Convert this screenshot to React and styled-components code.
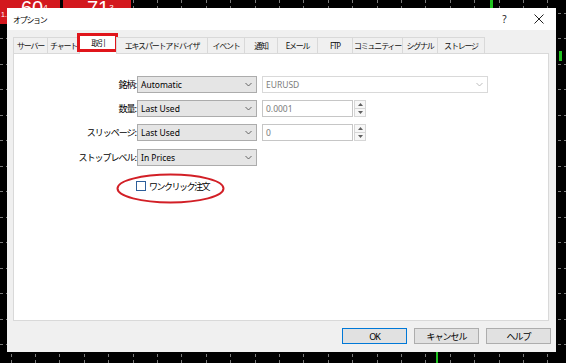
import React from 'react';
import styled, { createGlobalStyle } from 'styled-components';

const GlobalStyle = createGlobalStyle`
  html, body { margin: 0; padding: 0; background: #000; }
  body {
    width: 566px; height: 363px; overflow: hidden;
    font-family: "Noto Sans", "Noto Sans CJK JP", sans-serif;
  }
  * { box-sizing: border-box; }
`;

const Desktop = styled.div`
  position: relative;
  width: 566px;
  height: 363px;
  background: #000;
  overflow: hidden;
`;

const ChartSvg = styled.svg`
  position: absolute;
  left: 0;
  top: 0;
`;

const PriceTag = styled.div`
  position: absolute;
  top: 0;
  left: ${p => p.$x}px;
  width: ${p => p.$w}px;
  height: 24px;
  background: #d3181e;
  color: #fff;
  font-family: "Liberation Sans", sans-serif;
  line-height: 1;
`;

const TagClip = styled.div`
  position: absolute;
  top: 0;
  left: ${p => p.$x}px;
  height: 8px;
  overflow: hidden;
`;

const TagDigits = styled.span`
  display: block;
  font-size: 20px;
  line-height: 20px;
  margin-top: -2px;
  white-space: nowrap;
`;

const TagSup = styled.sup`
  font-size: 8px;
  vertical-align: top;
`;

const TagSmall = styled.span`
  position: absolute;
  left: 1px;
  top: 11px;
  font-size: 7px;
`;

const Dialog = styled.div`
  position: absolute;
  left: 7px;
  top: 8px;
  width: 549px;
  height: 344px;
  display: flex;
  flex-direction: column;
  background: #f0f0f0;
  color: #000;
`;

const TitleBar = styled.div`
  height: 22px;
  background: #fff;
  display: flex;
  align-items: center;
  padding-left: 6px;
`;

const TitleText = styled.span`
  flex: 1;
  font-size: 8px;
  letter-spacing: -1.3px;
  font-family: "Noto Sans CJK JP", sans-serif;
`;

const TitleButton = styled.div`
  width: ${p => p.$w}px;
  height: 22px;
  display: flex;
  align-items: center;
  justify-content: center;
  font-size: 10px;
  color: #222;
`;

const Body = styled.div`
  flex: 1;
  display: flex;
  flex-direction: column;
  padding: 7px 0 0 6px;
`;

const TabStrip = styled.div`
  display: flex;
  align-items: flex-end;
  height: 16px;
  position: relative;
  z-index: 1;
`;

const Tab = styled.div`
  position: relative;
  width: ${p => p.$w}px;
  height: ${p => (p.$active ? 19 : 16)}px;
  margin-bottom: ${p => (p.$active ? -1 : 0)}px;
  margin-right: -1px;
  border: 1px solid #d9d9d9;
  border-bottom: none;
  background: ${p => (p.$active ? '#fff' : '#f0f0f0')};
  display: flex;
  align-items: flex-start;
  justify-content: center;
  padding-top: ${p => (p.$active ? 1 : 2)}px;
  font-size: 8px;
  line-height: 11px;
  letter-spacing: -1.2px;
  white-space: nowrap;
  color: #111;
  font-family: "Noto Sans", "Noto Sans CJK JP", sans-serif;
`;

const TabMark = styled.div`
  position: absolute;
  left: -3px;
  top: -3px;
  width: 41px;
  height: 19px;
  border: 3px solid #e0151b;
  pointer-events: none;
`;

const Panel = styled.div`
  height: 268px;
  margin-right: 7px;
  background: #fff;
  border: 1px solid #d9d9d9;
  padding-top: 22px;
  display: flex;
  flex-direction: column;
`;

const Row = styled.div`
  display: flex;
  align-items: center;
  height: 17px;
  margin-bottom: ${p => p.$mb}px;
`;

const Label = styled.div`
  width: 122px;
  margin-right: 1px;
  text-align: right;
  font-size: 9px;
  letter-spacing: -1px;
  white-space: nowrap;
  font-family: "Noto Sans CJK JP", sans-serif;
`;

const Combo = styled.div`
  width: ${p => p.$w}px;
  height: 17px;
  display: flex;
  align-items: center;
  justify-content: space-between;
  padding: 0 4px 0 3px;
  background: ${p => (p.$disabled ? '#fff' : '#e5e5e5')};
  border: 1px solid ${p => (p.$disabled ? '#d9d9d9' : '#acacac')};
  color: ${p => (p.$disabled ? '#7d7d7d' : '#000')};
  font-size: 8.5px;
  margin-right: ${p => p.$mr || 0}px;
`;

const NumField = styled.div`
  width: 91px;
  height: 17px;
  display: flex;
  align-items: center;
  padding-left: 3px;
  border: 1px solid #c6c6c6;
  background: #fff;
  color: #7a7a7a;
  font-size: 8.5px;
`;

const Spinner = styled.div`
  width: 12px;
  height: 17px;
  margin-left: 1px;
  display: flex;
  flex-direction: column;
`;

const SpinHalf = styled.div`
  flex: 1;
  border: 1px solid #d6d6d6;
  background: #f7f7f7;
  margin-top: ${p => (p.$down ? -1 : 0)}px;
  display: flex;
  align-items: center;
  justify-content: center;
`;

const CheckRow = styled.div`
  position: relative;
  display: flex;
  align-items: center;
  height: 12px;
  margin-top: 7px;
  padding-left: 122px;
`;

const CheckBox = styled.div`
  width: 10px;
  height: 10px;
  border: 1px solid #2d5f9a;
  background: #fff;
  margin-right: 3px;
`;

const CheckLabel = styled.span`
  font-size: 9px;
  letter-spacing: -1.5px;
  font-family: "Noto Sans CJK JP", sans-serif;
  white-space: nowrap;
`;

const Ellipse = styled.svg`
  position: absolute;
  left: 102px;
  top: -7px;
  pointer-events: none;
`;

const ButtonRow = styled.div`
  display: flex;
  justify-content: flex-end;
  gap: 7px;
  padding: 7px 5px 8px 0;
`;

const Button = styled.div`
  width: 65px;
  height: 16px;
  display: flex;
  align-items: center;
  justify-content: center;
  background: #e1e1e1;
  border: 1px solid ${p => (p.$default ? '#0078d7' : '#adadad')};
  font-size: 9px;
  letter-spacing: -1px;
  font-family: "Noto Sans", "Noto Sans CJK JP", sans-serif;
`;

const Chevron = ({ color = '#555' }) => (
  <svg width="7" height="5" viewBox="0 0 7 5">
    <path d="M0.5 1 L3.5 4 L6.5 1" fill="none" stroke={color} strokeWidth="0.9" />
  </svg>
);

const Tri = ({ down }) => (
  <svg width="5" height="3" viewBox="0 0 5 3">
    <path d={down ? 'M0 0 L5 0 L2.5 3 Z' : 'M0 3 L5 3 L2.5 0 Z'} fill="#606060" />
  </svg>
);

const Chart = () => {
  const vx = [];
  for (let k = 0; k < 23; k++) vx.push(10.5 + 24.4 * k);
  const hy = [];
  for (let k = 0; k < 14; k++) hy.push(12.5 + 25.5 * k);
  return (
    <ChartSvg width="566" height="363">
      {vx.map(x => (
        <line key={'v' + x} x1={Math.round(x) + 0.5} y1="0" x2={Math.round(x) + 0.5} y2="363"
          stroke="#7b7b7b" strokeWidth="1" strokeDasharray="3 3" />
      ))}
      {hy.map(y => (
        <line key={'h' + y} x1="0" y1={Math.round(y) + 0.5} x2="566" y2={Math.round(y) + 0.5}
          stroke="#7b7b7b" strokeWidth="1" strokeDasharray="3 3" />
      ))}
      <rect x="490" y="0" width="3" height="8" fill="#1fc21f" />
      <rect x="559" y="51" width="3" height="10" fill="#1fc21f" />
      <rect x="436" y="352" width="2" height="11" fill="#1fc21f" />
    </ChartSvg>
  );
};

const tabs = [
  ['サーバー', 35],
  ['チャート', 33],
  ['取引', 38, true],
  ['エキスパートアドバイザ', 92],
  ['イベント', 38],
  ['通知', 34],
  ['Eメール', 41],
  ['FTP', 36],
  ['コミュニティー', 51],
  ['シグナル', 36],
  ['ストレージ', 48],
];

export default function App() {
  return (
    <Desktop>
      <GlobalStyle />
      <Chart />
      <PriceTag $x={0} $w={60}>
        <TagSmall>1.</TagSmall>
        <TagClip $x={21}>
          <TagDigits>60<TagSup>4</TagSup></TagDigits>
        </TagClip>
      </PriceTag>
      <PriceTag $x={63} $w={68}>
        <TagClip $x={24}>
          <TagDigits>71<TagSup>3</TagSup></TagDigits>
        </TagClip>
      </PriceTag>
      <Dialog>
        <TitleBar>
          <TitleText>オプション</TitleText>
          <TitleButton $w={33}>?</TitleButton>
          <TitleButton $w={35}>
            <svg width="10" height="10" viewBox="0 0 10 10">
              <path d="M0.5 0.5 L9.5 9.5 M9.5 0.5 L0.5 9.5" stroke="#222" strokeWidth="1" />
            </svg>
          </TitleButton>
        </TitleBar>
        <Body>
          <TabStrip>
            {tabs.map(([name, w, active]) => (
              <Tab key={name} $w={w} $active={active}>
                {name}
                {active && <TabMark />}
              </Tab>
            ))}
          </TabStrip>
          <Panel>
            <Row $mb={7}>
              <Label>銘柄:</Label>
              <Combo $w={120} $mr={5}>Automatic<Chevron /></Combo>
              <Combo $w={226} $disabled>EURUSD<Chevron color="#b5b5b5" /></Combo>
            </Row>
            <Row $mb={7}>
              <Label>数量:</Label>
              <Combo $w={120} $mr={5}>Last Used<Chevron /></Combo>
              <NumField>0.0001</NumField>
              <Spinner>
                <SpinHalf><Tri /></SpinHalf>
                <SpinHalf $down><Tri down /></SpinHalf>
              </Spinner>
            </Row>
            <Row $mb={8}>
              <Label>スリッページ:</Label>
              <Combo $w={120} $mr={5}>Last Used<Chevron /></Combo>
              <NumField>0</NumField>
              <Spinner>
                <SpinHalf><Tri /></SpinHalf>
                <SpinHalf $down><Tri down /></SpinHalf>
              </Spinner>
            </Row>
            <Row $mb={7}>
              <Label>ストップレベル:</Label>
              <Combo $w={120}>In Prices<Chevron /></Combo>
            </Row>
            <CheckRow>
              <CheckBox />
              <CheckLabel>ワンクリック注文</CheckLabel>
              <Ellipse width="109" height="31" viewBox="0 0 109 31">
                <ellipse cx="54.5" cy="15.5" rx="53" ry="14" fill="none" stroke="#d21f26" strokeWidth="2" />
              </Ellipse>
            </CheckRow>
          </Panel>
          <ButtonRow>
            <Button $default>OK</Button>
            <Button>キャンセル</Button>
            <Button>ヘルプ</Button>
          </ButtonRow>
        </Body>
      </Dialog>
    </Desktop>
  );
}
